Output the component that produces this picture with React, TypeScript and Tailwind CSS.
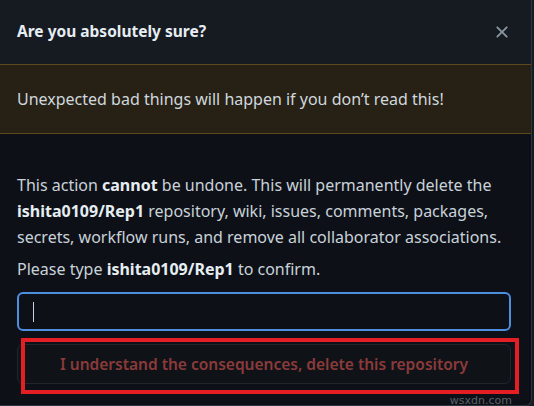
import React from "react";

export default function App() {
  const font = { fontFamily: "'Noto Sans', sans-serif" };
  return (
    <div className="relative w-[534px] h-[406px] bg-[#161b22] overflow-hidden" style={font}>
      <div className="w-[532px] h-[406px] bg-[#0d1117] border-r border-b border-[#30363d] rounded-br-md flex flex-col overflow-hidden">
        <div className="h-[64px] shrink-0 bg-[#161b22] flex items-center justify-between pl-[17px] pr-[19px]">
          <h2 className="text-[15.5px] font-bold text-[#e6edf3]">Are you absolutely sure?</h2>
          <svg width="20" height="20" viewBox="0 0 16 16" fill="#8b949e">
            <path d="M3.72 3.72a.75.75 0 0 1 1.06 0L8 6.94l3.22-3.22a.749.749 0 0 1 1.275.326.749.749 0 0 1-.215.734L9.06 8l3.22 3.22a.749.749 0 0 1-.326 1.275.749.749 0 0 1-.734-.215L8 9.06l-3.22 3.22a.751.751 0 0 1-1.042-.018.751.751 0 0 1-.018-1.042L6.94 8 3.72 4.78a.75.75 0 0 1 0-1.06Z" />
          </svg>
        </div>
        <div className="h-[70px] shrink-0 bg-[#272115] border-y border-[#5c4a1e] flex items-center pl-[17px] text-[16px] text-[#d0d7de]">
          Unexpected bad things will happen if you don’t read this!
        </div>
        <div className="px-[17px] pt-[38px] pr-[20px] text-[16px] leading-[26px] text-[#c9d1d9]">
          <p>
            This action <b className="text-[#e6edf3]">cannot</b> be undone. This will permanently delete the{" "}
            <b className="text-[#e6edf3]">ishita0109/Rep1</b> repository, wiki, issues, comments, packages, secrets,
            workflow runs, and remove all collaborator associations.
          </p>
          <p className="mt-[6px]">
            Please type <b className="text-[#e6edf3]">ishita0109/Rep1</b> to confirm.
          </p>
          <div className="mt-[10px] h-[39px] rounded-[6px] border-2 border-[#4d8fdf] flex items-center pl-[14px]">
            <div className="w-px h-[20px] bg-[#c9d1d9]" />
          </div>
          <div className="mt-[13px] h-[40px] rounded-[6px] border border-[#21262d] bg-[#0f1318] flex items-center justify-center text-[15.5px] font-semibold text-[#8b3a3a]">
            I understand the consequences, delete this repository
          </div>
        </div>
      </div>
      <div className="absolute left-[21px] top-[338px] w-[498px] h-[56px] border-[4px] border-[#e41e25]" />
      <div className="absolute right-[22px] bottom-[-3px] text-[11px] text-[#5a6068]" style={{ fontFamily: "'DejaVu Sans', sans-serif" }}>
        wsxdn.com
      </div>
    </div>
  );
}
